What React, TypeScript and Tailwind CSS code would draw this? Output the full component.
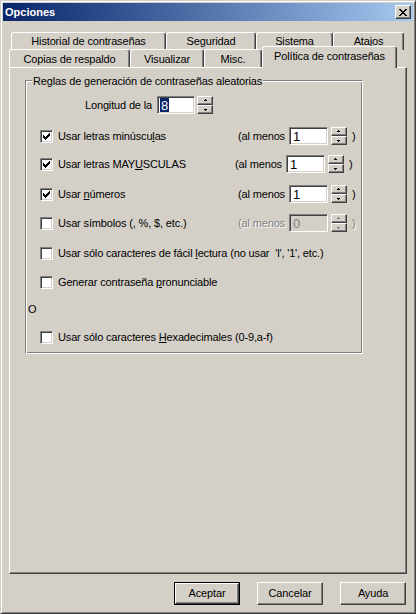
import React from "react";

const raised =
  "border border-t-white border-l-white border-b-[#404040] border-r-[#404040] shadow-[inset_-1px_-1px_#808080]";
const sunken =
  "border border-t-[#808080] border-l-[#808080] border-b-white border-r-white shadow-[inset_1px_1px_#404040,inset_-1px_-1px_#d4d0c8]";

function Check() {
  const cols: [number, number][] = [
    [3, 5],
    [4, 6],
    [5, 7],
    [6, 6],
    [7, 5],
    [8, 4],
    [9, 3],
  ];
  return (
    <svg width="13" height="13" viewBox="0 0 13 13" shapeRendering="crispEdges" className="absolute left-[-1px] top-[-1px]">
      {cols.map(([x, y]) => (
        <rect key={x} x={x} y={y} width="1" height="3" fill="#000" />
      ))}
    </svg>
  );
}

function CheckBox({ checked }: { checked?: boolean }) {
  return (
    <div className={`relative w-[13px] h-[13px] bg-white shrink-0 ${sunken}`}>
      {checked && <Check />}
    </div>
  );
}

function Tri({ up, disabled }: { up?: boolean; disabled?: boolean }) {
  const c = disabled ? "#808080" : "#000";
  return (
    <svg width="5" height="3" viewBox="0 0 5 3" shapeRendering="crispEdges">
      {up ? (
        <>
          <rect x="2" y="0" width="1" height="1" fill={c} />
          <rect x="1" y="1" width="3" height="1" fill={c} />
        </>
      ) : (
        <>
          <rect x="1" y="1" width="3" height="1" fill={c} />
          <rect x="2" y="2" width="1" height="1" fill={c} />
        </>
      )}
    </svg>
  );
}

function Spinner({ disabled }: { disabled?: boolean }) {
  return (
    <div className="flex flex-col w-[16px] h-[18px] shrink-0">
      <div className={`h-[9px] flex items-center justify-center bg-[#d4d0c8] ${raised}`}>
        <Tri up disabled={disabled} />
      </div>
      <div className={`h-[9px] flex items-center justify-center bg-[#d4d0c8] ${raised}`}>
        <Tri disabled={disabled} />
      </div>
    </div>
  );
}

function NumInput({ value, disabled }: { value: string; disabled?: boolean }) {
  return (
    <div
      className={`w-[39px] h-[18px] flex items-center pl-[3px] text-[13px] leading-none shrink-0 ${sunken} ${
        disabled ? "bg-[#d4d0c8] text-[#808080]" : "bg-white text-black"
      }`}
    >
      {value}
    </div>
  );
}

function AlMenos({ value, disabled }: { value: string; disabled?: boolean }) {
  const dis = disabled ? "text-[#808080] [text-shadow:1px_1px_#ffffff]" : "";
  return (
    <div className="flex items-center h-[18px]">
      <span className={`mr-[4px] whitespace-nowrap ${dis}`}>(al menos</span>
      <NumInput value={value} disabled={disabled} />
      <div className="ml-[3px]">
        <Spinner disabled={disabled} />
      </div>
      <span className={`ml-[5px] ${dis}`}>)</span>
    </div>
  );
}

function Row({
  mt,
  checked,
  children,
  right,
}: {
  mt: string;
  checked?: boolean;
  children: React.ReactNode;
  right?: React.ReactNode;
}) {
  return (
    <div className={`flex items-center h-[18px] pl-[14px] ${mt}`}>
      <CheckBox checked={checked} />
      <div className="ml-[5px] w-[180px] whitespace-nowrap">{children}</div>
      {right}
    </div>
  );
}

function Tab({ w, label, selected, low }: { w: string; label: string; selected?: boolean; low?: boolean }) {
  return (
    <div
      className={`${w} ${
        selected ? "relative z-10 h-[22px] -mt-[3px] pb-[3px]" : low ? "h-[18px] pt-[1px]" : "h-[18px]"
      } flex items-center justify-center bg-[#d4d0c8] border-l border-t border-l-white border-t-white border-r border-r-[#404040] rounded-t-[3px] shadow-[inset_-1px_0_#808080] whitespace-nowrap`}
    >
      {label}
    </div>
  );
}

function Btn({ label, def }: { label: string; def?: boolean }) {
  return (
    <div className={`w-[66px] h-[23px] ${def ? "border border-black" : ""}`}>
      <div className={`w-full h-full flex items-center justify-center bg-[#d4d0c8] ${raised}`}>{label}</div>
    </div>
  );
}

export default function App() {
  return (
    <div
      className="w-[416px] h-[614px] bg-[#d4d0c8] border border-t-[#d4d0c8] border-l-[#d4d0c8] border-b-[#404040] border-r-[#404040] shadow-[inset_1px_1px_#ffffff,inset_-1px_-1px_#808080] p-[2px] flex flex-col text-[11px] tracking-[-0.15px] text-black overflow-hidden"
      style={{ fontFamily: '"Liberation Sans", Arial, sans-serif' }}
    >
      {/* Title bar */}
      <div className="h-[18px] flex items-center justify-between bg-gradient-to-r from-[#0a246a] to-[#a6caf0] pl-[2px] pr-[2px]">
        <span className="text-white font-bold text-[11px] tracking-normal">Opciones</span>
        <div className={`w-[16px] h-[14px] bg-[#d4d0c8] flex items-center justify-center ${raised}`}>
          <svg width="8" height="7" viewBox="0 0 8 7" shapeRendering="crispEdges">
            <path d="M0 0h2v1h-2zM6 0h2v1h-2zM1 1h2v1h-2zM5 1h2v1h-2zM2 2h4v1h-4zM3 3h2v1h-2zM2 4h4v1h-4zM1 5h2v1h-2zM5 5h2v1h-2zM0 6h2v1h-2zM6 6h2v1h-2z" fill="#000" />
          </svg>
        </div>
      </div>

      {/* Body */}
      <div className="flex flex-col px-[6px]">
        {/* Tabs */}
        <div className="mt-[11px] flex pl-[2px] h-[18px]">
          <Tab w="w-[155px]" label="Historial de contraseñas" />
          <Tab w="w-[90px]" label="Seguridad" />
          <Tab w="w-[77px]" label="Sistema" />
          <Tab w="w-[71px]" label="Atajos" />
        </div>
        <div className="flex h-[18px] -mt-[1px] items-start">
          <Tab w="w-[121px]" label="Copias de respaldo" low />
          <Tab w="w-[74px]" label="Visualizar" low />
          <Tab w="w-[58px]" label="Misc." low />
          <Tab w="w-[135px]" label="Política de contraseñas" selected />
        </div>

        {/* Panel */}
        <div className="w-[398px] h-[507px] border border-t-white border-l-white border-b-[#404040] border-r-[#404040] shadow-[inset_-1px_-1px_#808080] flex flex-col">
          <div className="relative mt-[12px] ml-[15px] w-[338px] h-[274px] border border-t-[#808080] border-l-[#808080] border-b-white border-r-white shadow-[inset_1px_1px_#ffffff,inset_-1px_-1px_#808080]">
            <span className="absolute -top-[8px] left-[6px] px-[1px] bg-[#d4d0c8] whitespace-nowrap">
              Reglas de generación de contraseñas aleatorias
            </span>
            <div className="flex flex-col">
              <div className="flex items-center h-[18px] mt-[15px]">
                <span className="w-[126px] text-right">Longitud de la</span>
                <div className={`ml-[5px] w-[38px] h-[18px] flex items-center pl-[2px] bg-white text-[13px] leading-none ${sunken}`}>
                  <span className="bg-[#0a246a] text-white px-[1px] h-[14px] flex items-center">8</span>
                </div>
                <div className="ml-[2px]">
                  <Spinner />
                </div>
              </div>

              <Row mt="mt-[13px]" checked right={<AlMenos value="1" />}>
                Usar letras minúscu<u>l</u>as
              </Row>
              <Row mt="mt-[10px]" checked right={<div className="-ml-[3px]"><AlMenos value="1" /></div>}>
                Usar letras MAY<u>U</u>SCULAS
              </Row>
              <Row mt="mt-[12px]" checked right={<AlMenos value="1" />}>
                Usar <u>n</u>úmeros
              </Row>
              <Row mt="mt-[11px]" right={<AlMenos value="0" disabled />}>
                Usar símbolos (<u>,</u> %, $, etc.)
              </Row>
              <Row mt="mt-[12px]">
                Usar sólo caracteres de fácil <u>l</u>ectura (no usar &nbsp;'l', '1', etc.)
              </Row>
              <Row mt="mt-[11px]">
                Generar contraseña <u>p</u>ronunciable
              </Row>
              <div className="h-[18px] mt-[9px] flex items-center pl-[2px]">O</div>
              <Row mt="mt-[10px]">
                Usar sólo caracteres <u>H</u>exadecimales (0-9,a-f)
              </Row>
            </div>
          </div>
        </div>

        {/* Buttons */}
        <div className="mt-[8px] flex justify-end gap-[17px] pr-[1px]">
          <Btn label="Aceptar" def />
          <Btn label="Cancelar" />
          <Btn label="Ayuda" />
        </div>
      </div>
    </div>
  );
}
